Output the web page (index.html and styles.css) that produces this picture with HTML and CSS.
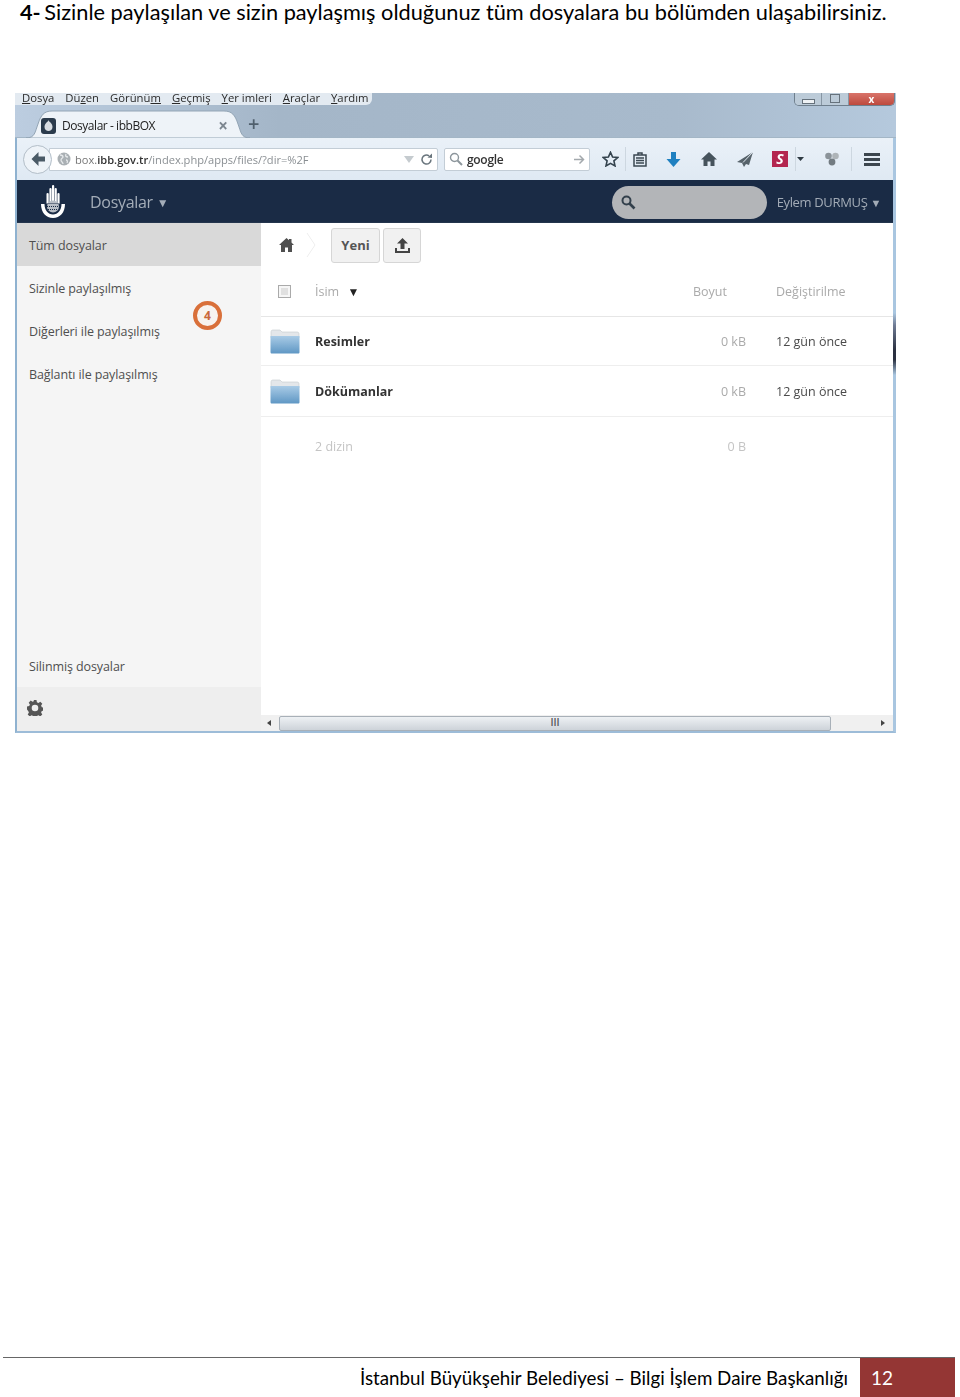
FILE: index.html
```html
<!DOCTYPE html>
<html lang="tr">

<head>
    <meta charset="UTF-8">
    <title>Sizinle paylaşılan</title>
    <link rel="stylesheet" href="styles.css">
</head>

<body>
    <div class="page">
        <p class="step"><b>4-</b> Sizinle paylaşılan ve sizin paylaşmış olduğunuz tüm dosyalara bu bölümden ulaşabilirsiniz.</p>

        <div class="shot">
            <div class="chrome">
                <div class="menubar">
                    <span><u>D</u>osya</span>
                    <span>Dü<u>z</u>en</span>
                    <span>Görünü<u>m</u></span>
                    <span><u>G</u>eçmiş</span>
                    <span><u>Y</u>er imleri</span>
                    <span><u>A</u>raçlar</span>
                    <span><u>Y</u>ardım</span>
                </div>
                <div class="winbtns">
                    <span class="winbtn"><i class="win-min"></i></span>
                    <span class="winbtn"><i class="win-max"></i></span>
                    <span class="winbtn win-close">x</span>
                </div>
                <div class="tabstrip">
                    <div class="tab">
                        <svg class="tab-shape" width="224" height="28" viewBox="0 0 224 28"><path d="M0 28c9 0 9-6 12-14C15 5 18 1 26 1h172c8 0 11 4 14 13 3 8 3 14 12 14z" fill="#eef3f8" stroke="#93a5b5"/></svg>
                        <span class="favicon">
                            <svg width="11" height="13" viewBox="0 0 11 13"><path d="M5.500 1c.5 1.500 1 1.500 2 2.500C9 5 9.500 6.500 9.500 8c0 2.500-2 4-4 4s-4-1.500-4-4c0-1.500.5-3 2-4.500 1-1 1.500-1 2-2.500z" fill="#d8dde2"/></svg>
                        </span>
                        <span class="tab-title">Dosyalar - ibbBOX</span>
                        <span class="tab-close">×</span>
                    </div>
                    <span class="tab-new">+</span>
                </div>
            </div>

            <div class="toolbar">
                <span class="backbtn">
                    <svg width="16" height="16" viewBox="0 0 16 16"><path d="M8.500 1 1.500 8l7 7v-4.500H15v-5H8.500z" fill="#4a5a66"/></svg>
                </span>
                <div class="urlbar">
                    <svg class="globe" width="14" height="14" viewBox="0 0 14 14"><circle cx="7" cy="7" r="6.500" fill="#aab0b4"/><path d="M3 3c2 0 3 1 3 2s-2 1-2 3 2 2 2 4M9 2c-1 2 0 3 2 3M9 8c1 0 2 1 1 3" stroke="#e6e9eb" fill="none" stroke-width="1.300"/></svg>
                    <span class="url">box.<b>ibb.gov.tr</b><em>/index.php/apps/files/?dir=%2F</em></span>
                    <svg class="url-drop" width="10" height="7" viewBox="0 0 10 7"><path d="M0 0h10L5 7z" fill="#c5cbcf"/></svg>
                    <svg width="13" height="13" viewBox="0 0 13 13"><path d="M11 6.500A4.500 4.500 0 1 1 9 2.800" stroke="#69757d" stroke-width="1.500" fill="none"/><path d="M7.500 4.500 12 5V.5z" fill="#69757d"/></svg>
                </div>
                <div class="searchbar">
                    <svg width="14" height="14" viewBox="0 0 14 14"><circle cx="5.500" cy="5.500" r="4" stroke="#8d969c" stroke-width="1.400" fill="none"/><path d="m8.500 8.500 4.500 4.500" stroke="#8d969c" stroke-width="2"/></svg>
                    <span class="search-text">google</span>
                    <svg width="12" height="11" viewBox="0 0 12 11"><path d="M1 5.500h9M6.500 1.500l4 4-4 4" stroke="#a3a9ad" stroke-width="1.500" fill="none"/></svg>
                </div>
                <div class="tools">
                    <svg width="17" height="16" viewBox="0 0 17 16"><path d="m8.500 1.300 2.100 4.700 5.100.5-3.800 3.400 1.100 5-4.500-2.600L4 14.900l1.100-5L1.300 6.500l5.100-.5z" fill="none" stroke="#33424d" stroke-width="1.600"/></svg>
                    <i class="t-sep sep-star"></i>
                    <svg class="t-list" width="14" height="15" viewBox="0 0 14 15"><path d="M1 3h12v11H1zM5 3V1h4v2M3 6h8M3 8.500h8M3 11h8" fill="none" stroke="#3b4852" stroke-width="1.500"/></svg>
                    <svg class="t-down" width="15" height="15" viewBox="0 0 15 15"><path d="M5 0h5v7h4.500l-7 8-7-8H5z" fill="#1f80c0"/></svg>
                    <svg class="t-home" width="16" height="14" viewBox="0 0 16 14"><path d="M8 0 0 7.500h2.500V14h4V9.500h3V14h4V7.500H16z" fill="#46535c"/></svg>
                    <svg class="t-send" width="16" height="15" viewBox="0 0 16 15"><path d="M16 0 0 10l5 1 2 4 2-3 3 1z" fill="#56626a"/><path d="M16 0 6 10.500" stroke="#dfe7ee" stroke-width="1"/></svg>
                    <span class="t-s">S</span>
                    <i class="t-sep sep-s"></i>
                    <svg class="t-caret" width="7" height="4" viewBox="0 0 7 4"><path d="M0 0h7L3.500 4z" fill="#2e3a43"/></svg>
                    <svg class="t-dots" width="14" height="14" viewBox="0 0 14 14"><circle cx="3.500" cy="4" r="3.300" fill="#8b9399"/><circle cx="10.500" cy="4" r="3.300" fill="#aeb4b8"/><circle cx="7" cy="10" r="3.400" fill="#727b81"/></svg>
                    <i class="t-sep sep-menu"></i>
                    <span class="t-menu"><i></i><i></i><i></i></span>
                </div>
            </div>

            <div class="apphead">
                <svg class="logo" width="26" height="34" viewBox="0 0 26 34">
                    <rect x="6.500" y="8" width="2.200" height="11" rx="1.100" fill="#fff"/>
                    <rect x="9.400" y="3" width="2.200" height="15" rx="1.100" fill="#fff"/>
                    <rect x="12" y="0" width="2.200" height="18" rx="1.100" fill="#fff"/>
                    <rect x="14.600" y="3" width="2.200" height="15" rx="1.100" fill="#fff"/>
                    <rect x="17.400" y="8" width="2.200" height="11" rx="1.100" fill="#fff"/>
                    <circle cx="13" cy="21.500" r="6" fill="#b9bec6"/>
                    <path d="M7.500 18.500h11M7 21.500h12M8 24.500h10" stroke="#1a2b45" stroke-dasharray="1 1"/>
                    <path d="M1 19h3.500c0 6 3.500 10.500 8.500 10.500S21.500 25 21.500 19H25c0 8.500-5 14-12 14S1 27.500 1 19z" fill="#fff"/>
                </svg>
                <span class="app-name">Dosyalar <small>▼</small></span>
                <div class="appsearch">
                    <svg width="15" height="15" viewBox="0 0 15 15"><circle cx="5.500" cy="5.500" r="4" stroke="#33404c" stroke-width="2" fill="none"/><path d="m8.500 8.500 5 5" stroke="#33404c" stroke-width="2.600"/></svg>
                </div>
                <span class="username">Eylem DURMUŞ <small>▼</small></span>
            </div>

            <div class="appbody">
                <div class="sidebar">
                    <div class="nav-item active">Tüm dosyalar</div>
                    <div class="nav-item">Sizinle paylaşılmış</div>
                    <div class="nav-item">Diğerleri ile paylaşılmış</div>
                    <div class="nav-item">Bağlantı ile paylaşılmış</div>
                    <div class="nav-item nav-deleted">Silinmiş dosyalar</div>
                    <div class="nav-settings">
                        <svg width="16" height="16" viewBox="0 0 16 16"><path fill-rule="evenodd" d="M6.500 0h3l.4 2.200 1.500.7 1.900-1.200 2 2.100-1.200 1.800.7 1.600 2.200.4v3l-2.200.4-.7 1.500 1.200 1.900-2 2-1.900-1.200-1.500.7-.4 2.100h-3l-.4-2.100-1.500-.7-1.900 1.200-2-2 1.200-1.900-.7-1.500L0 9.500v-3l2.200-.4.7-1.600L1.700 2.700l2-2.100 1.900 1.200 1.500-.7zM8 4.700a3.300 3.300 0 1 0 0 6.600 3.300 3.300 0 0 0 0-6.600z" fill="#555"/></svg>
                    </div>
                    <span class="callout">4</span>
                </div>

                <div class="content">
                    <div class="controls">
                        <svg class="crumb-home" width="15" height="14" viewBox="0 0 15 14"><path d="M7.500 0 10 2.300V1h2.500v3.600L15 7h-2v7H9V9.500H6V14H2V7H0z" fill="#4f4f4f"/></svg>
                        <svg class="crumb-sep" width="10" height="26" viewBox="0 0 10 26"><path d="m1 1 8 12-8 12" fill="none" stroke="#eee"/></svg>
                        <span class="btn btn-new">Yeni</span>
                        <span class="btn btn-up">
                            <svg width="17" height="15" viewBox="0 0 17 15"><path d="M8.500 0 14 5.500h-3.500V11h-4V5.500H3zM1 10h2v3h11v-3h2v5H1z" fill="#444"/></svg>
                        </span>
                    </div>

                    <div class="row row-head">
                        <span class="cell-check"><i class="check"></i></span>
                        <span class="cell-name">İsim <b class="sort">▼</b></span>
                        <span class="cell-size">Boyut</span>
                        <span class="cell-date">Değiştirilme</span>
                    </div>

                    <div class="row row-file">
                        <span class="cell-check">
                            <svg class="folder" width="30" height="25" viewBox="0 0 30 25"><use href="#folder"/></svg>
                        </span>
                        <span class="cell-name file-name">Resimler</span>
                        <span class="cell-size">0 kB</span>
                        <span class="cell-date">12 gün önce</span>
                    </div>
                    <div class="row row-file row-file2">
                        <span class="cell-check">
                            <svg class="folder" width="30" height="25" viewBox="0 0 30 25"><use href="#folder"/></svg>
                        </span>
                        <span class="cell-name file-name">Dökümanlar</span>
                        <span class="cell-size">0 kB</span>
                        <span class="cell-date">12 gün önce</span>
                    </div>
                    <div class="row row-sum">
                        <span class="cell-check"></span>
                        <span class="cell-name">2 dizin</span>
                        <span class="cell-size">0 B</span>
                        <span class="cell-date"></span>
                    </div>

                    <div class="hscroll">
                        <i class="arrow-l"></i>
                        <div class="thumb"><span>III</span></div>
                        <i class="arrow-r"></i>
                    </div>
                </div>
            </div>
        </div>

        <div class="footer">
            <span class="footer-text">İstanbul Büyükşehir Belediyesi – Bilgi İşlem Daire Başkanlığı</span>
            <span class="footer-num">12</span>
        </div>
    </div>

    <svg width="0" height="0" class="defs">
        <defs>
            <linearGradient id="fold" x1="0" y1="0" x2="0" y2="1">
                <stop offset="0" stop-color="#a9cbe6" />
                <stop offset="1" stop-color="#5f97c4" />
            </linearGradient>
            <g id="folder">
                <path d="M1 4c0-2 0-3 2-3h7l2 2h15c2 0 2 1 2 3v3H1z" fill="#e4e7ea" stroke="#c4c9cd" stroke-width=".6"/>
                <path d="M.5 7h29v16c0 1-.5 1.500-1.500 1.500H2c-1 0-1.500-.5-1.500-1.500z" fill="url(#fold)"/>
            </g>
        </defs>
    </svg>
</body>

</html>
```

FILE: styles.css
```css
* {
    padding: 0;
    margin: 0;
    box-sizing: border-box;
}

body {
    background: #fff;
    font-family: "Open Sans", "Liberation Sans", sans-serif;
}

.defs {
    position: absolute;
}

.page {
    height: 1397px;
    display: flex;
    flex-direction: column;
    overflow: hidden;
}

.step {
    font-family: Lato, "Liberation Sans", sans-serif;
    font-size: 21.750px;
    line-height: 24px;
    color: #000;
    padding-left: 20px;
    white-space: nowrap;
}

.step b {
    margin-right: -2px;
}

/* browser screenshot */
.shot {
    position: relative;
    width: 881px;
    height: 640px;
    margin: 69px 0 0 15px;
    display: flex;
    flex-direction: column;
    border-left: 2px solid #8fb2d0;
    border-right: 3px solid #a9c6e0;
    border-bottom: 2px solid #9dbcd8;
    background: #fff;
    filter: blur(.5px);
}

/* dark window behind the screenshot shows through its right edge */
.shot::after {
    content: "";
    position: absolute;
    top: 220px;
    right: -3px;
    width: 3px;
    height: 62px;
    background: linear-gradient(#a9c6e0, #6f7b94 20%, #2a3040 60%, #2a3040 75%, #a9c6e0);
}

.chrome {
    height: 45px;
    background: linear-gradient(90deg, #bccde0, #a4b6c8 30%, #a8bacc 75%, #b5c9dd);
    display: flex;
    flex-direction: column;
    margin-left: -2px;
    margin-right: -3px;
}

.menubar {
    width: 357px;
    height: 12px;
    background: #e3eaf1;
    border-radius: 0 0 6px 0;
    display: flex;
    gap: 11px;
    padding-left: 7px;
    font-size: 11.300px;
    line-height: 10px;
    color: #2a2a2a;
    white-space: nowrap;
}

.winbtns {
    position: absolute;
    top: 0;
    right: -2px;
    width: 101px;
    height: 13px;
    display: flex;
    border: 1px solid #6f7f8d;
    border-top: 0;
    border-radius: 0 0 5px 5px;
    overflow: hidden;
}

.winbtn {
    width: 27px;
    border-right: 1px solid #8796a3;
    background: #bccbd8;
    display: flex;
    align-items: center;
    justify-content: center;
}

.win-min {
    width: 13px;
    height: 5px;
    margin-top: 5px;
    border: 1px solid #66727c;
    background: #eef2f5;
}

.win-max {
    width: 10px;
    height: 9px;
    margin-top: -2px;
    border: 1px solid #66727c;
}

.win-close {
    flex: 1;
    border: 0;
    background: linear-gradient(#d9746a, #bd4a3e);
    color: #fff;
    font-size: 10px;
    font-weight: 700;
    line-height: 10px;
}

.tabstrip {
    flex: 1;
    display: flex;
    align-items: flex-end;
    padding-left: 23px;
    border-bottom: 1px solid #a3b6c6;
}

.tab {
    position: relative;
    width: 200px;
    height: 28px;
    display: flex;
    align-items: center;
    padding: 3px 10px 0 3px;
    margin-bottom: -1px;
}

.tab > span {
    position: relative;
}

.tab-shape {
    position: absolute;
    left: -12px;
    top: 0;
}

.favicon {
    width: 15px;
    height: 16px;
    background: #2b3b4c;
    border-radius: 3px;
    display: flex;
    align-items: center;
    justify-content: center;
    margin-right: 6px;
}

.tab-title {
    font-size: 12px;
    letter-spacing: -.45px;
    color: #222;
    flex: 1;
}

.tab-close {
    font-size: 17px;
    line-height: 16px;
    font-weight: 700;
    color: #7d8790;
}

.tab-new {
    font-size: 20px;
    font-weight: 600;
    line-height: 24px;
    margin-left: 10px;
    color: #4f5f6c;
    height: 25px;
}

.toolbar {
    height: 42px;
    background: linear-gradient(#eaf1f8, #dfe9f3);
    display: flex;
    align-items: center;
    padding: 0 0 0 6px;
}

.backbtn {
    width: 29px;
    height: 29px;
    border-radius: 50%;
    border: 1px solid #b3bec8;
    background: #eef3f8;
    display: flex;
    align-items: center;
    justify-content: center;
    z-index: 1;
}

.urlbar {
    width: 389px;
    height: 23px;
    margin-left: -3px;
    background: #fff;
    border: 1px solid #c3cdd6;
    border-radius: 0 2px 2px 0;
    display: flex;
    align-items: center;
    padding: 0 4px 0 7px;
}

.globe {
    margin-right: 4px;
}

.url {
    flex: 1;
    font-size: 11.100px;
    color: #777;
    white-space: nowrap;
}

.url b {
    font-weight: 600;
    color: #333;
}

.url em {
    font-style: normal;
    color: #8a8f93;
}

.url-drop {
    margin-right: 6px;
}

.searchbar {
    width: 146px;
    height: 23px;
    margin-left: 6px;
    background: #fff;
    border: 1px solid #c3cdd6;
    border-radius: 2px;
    display: flex;
    align-items: center;
    padding: 0 4px;
}

.search-text {
    flex: 1;
    font-size: 12px;
    font-weight: 600;
    letter-spacing: -.3px;
    color: #333;
    padding-left: 4px;
}

.tools {
    display: flex;
    align-items: center;
    margin-left: 12px;
}

.t-sep {
    width: 1px;
    height: 24px;
    background: #cdd7e0;
}

.sep-star {
    margin-left: 6px;
}

.t-list {
    margin-left: 7px;
}

.t-down {
    margin-left: 19px;
}

.t-home {
    margin-left: 20px;
}

.t-send {
    margin-left: 20px;
}

.t-s {
    width: 16px;
    height: 16px;
    margin-left: 19px;
    background: #b3254f;
    color: #fff;
    font-size: 14px;
    font-weight: 700;
    font-style: italic;
    line-height: 16px;
    text-align: center;
}

.sep-s {
    margin-left: 7px;
}

.t-caret {
    margin-left: 1px;
}

.t-dots {
    margin-left: 21px;
}

.sep-menu {
    margin-left: 12px;
}

.t-menu {
    margin-left: 12px;
    width: 16px;
    display: flex;
    flex-direction: column;
    gap: 2px;
}

.t-menu i {
    height: 3px;
    background: #3c464e;
}

.apphead {
    height: 43px;
    background: #1a2b45;
    display: flex;
    align-items: center;
    padding: 2px 12px 0 23px;
    border-bottom: 1px solid #24354d;
}

.app-name {
    margin-left: 24px;
    font-size: 16px;
    letter-spacing: -.3px;
    color: #a4adb8;
}

.app-name small {
    font-size: 12px;
    vertical-align: 1px;
}

.appsearch {
    width: 155px;
    height: 33px;
    margin-left: auto;
    background: #b3b5b8;
    border-radius: 17px;
    display: flex;
    align-items: center;
    padding-left: 9px;
}

.username {
    margin-left: 10px;
    font-size: 13px;
    letter-spacing: -.35px;
    color: #a2abb6;
}

.username small {
    font-size: 11px;
}

.appbody {
    flex: 1;
    display: flex;
    min-height: 0;
}

/* left navigation */
.sidebar {
    position: relative;
    width: 244px;
    background: #f5f5f5;
    display: flex;
    flex-direction: column;
}

.nav-item {
    height: 43px;
    padding: 2px 0 0 12px;
    line-height: 42px;
    font-size: 12.500px;
    letter-spacing: -.1px;
    color: #4f4f4f;
}

.nav-item.active {
    background: #d9d9d9;
}

.nav-deleted {
    margin-top: auto;
}

.nav-settings {
    height: 44px;
    background: #eeeeee;
    display: flex;
    align-items: center;
    padding: 0 0 2px 10px;
}

.callout {
    position: absolute;
    left: 176px;
    top: 78px;
    width: 29px;
    height: 29px;
    border: 4px solid #d9703a;
    border-radius: 50%;
    background: #f7f3ef;
    color: #c9683a;
    font-size: 12px;
    font-weight: 700;
    line-height: 21px;
    text-align: center;
}

/* file list */
.content {
    flex: 1;
    display: flex;
    flex-direction: column;
    position: relative;
}

.controls {
    height: 44px;
    display: flex;
    align-items: center;
    padding-left: 18px;
}

.crumb-sep {
    margin-left: 12px;
}

.btn {
    height: 35px;
    background: #f1f1f1;
    border: 1px solid #d6d6d6;
    border-radius: 3px;
    display: flex;
    align-items: center;
    justify-content: center;
}

.btn-new {
    width: 49px;
    margin-left: 15px;
    font-size: 13px;
    font-weight: 700;
    color: #555;
}

.btn-up {
    width: 38px;
    margin-left: 3px;
}

.row {
    display: flex;
    align-items: center;
    padding-right: 29px;
    font-size: 12.500px;
}

.row-head {
    height: 50px;
    border-bottom: 1px solid #e6e6e6;
    color: #aaa;
}

.row-file {
    height: 49px;
    border-bottom: 1px solid #eeeeee;
}

.row-file2 {
    height: 51px;
}

.row-sum {
    height: 58px;
    color: #c4c4c4;
}

.cell-check {
    width: 54px;
    padding-left: 9px;
    display: flex;
    align-items: center;
}

.check {
    width: 13px;
    height: 13px;
    margin-left: 8px;
    border: 1px solid #aaa;
    background: #e0e0e0;
    box-shadow: inset 0 0 0 2px #f6f6f6;
}

.cell-name {
    flex: 1;
}

.sort {
    font-size: 12px;
    color: #222;
    margin-left: 5px;
}

.file-name {
    font-weight: 700;
    color: #333;
}

.cell-size {
    width: 53px;
    text-align: right;
    color: #aaa;
}

.row-sum .cell-size {
    color: #c4c4c4;
}

.cell-date {
    width: 118px;
    padding-left: 30px;
    color: #4a4a4a;
}

.row-head .cell-size {
    width: 34px;
}

.row-head .cell-size,
.row-head .cell-date {
    color: #aaa;
}

.row-head .cell-date {
    width: 137px;
    padding-left: 49px;
}

.hscroll {
    position: absolute;
    left: 0;
    right: 0;
    bottom: 0;
    height: 16px;
    background: #f0f0f0;
    display: flex;
    align-items: center;
    padding: 0 8px 0 6px;
}

.thumb {
    width: 552px;
    height: 15px;
    margin-left: 8px;
    background: linear-gradient(#eef1f4, #cdd3d9);
    border: 1px solid #a8b0b8;
    border-radius: 2px;
    font-size: 10px;
    font-weight: 600;
    line-height: 11px;
    text-align: center;
    color: #555;
}

.arrow-l {
    border: 3px solid transparent;
    border-right: 4px solid #444;
    border-left: 0;
}

.arrow-r {
    margin-left: auto;
    border: 3px solid transparent;
    border-left: 4px solid #444;
    border-right: 0;
}

/* page footer */
.footer {
    margin-top: auto;
    margin-left: 3px;
    width: 952px;
    height: 40px;
    border-top: 1px solid #666;
    display: flex;
    justify-content: flex-end;
    align-items: center;
    font-family: Lato, "Liberation Sans", sans-serif;
}

.footer-text {
    font-size: 18.750px;
    color: #000;
    margin-right: 12px;
    white-space: nowrap;
}

.footer-num {
    width: 95px;
    height: 100%;
    background: #943634;
    color: #fff;
    font-size: 19px;
    line-height: 39px;
    padding-left: 11px;
}
```
